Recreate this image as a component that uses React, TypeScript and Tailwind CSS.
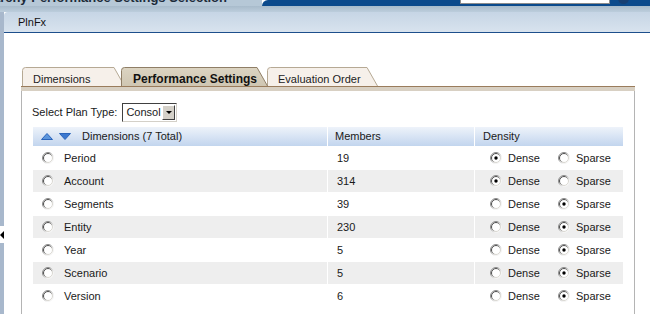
const rows = [
  { name: "Period", members: "19", dense: true },
  { name: "Account", members: "314", dense: true },
  { name: "Segments", members: "39", dense: false },
  { name: "Entity", members: "230", dense: false },
  { name: "Year", members: "5", dense: false },
  { name: "Scenario", members: "5", dense: false },
  { name: "Version", members: "6", dense: false },
];

function Radio({ checked }: { checked?: boolean }) {
  return (
    <svg width="12" height="12" viewBox="0 0 12 12" className="shrink-0">
      <defs>
        <linearGradient id="radio-outer" x1="0" y1="0" x2="1" y2="1">
          <stop offset="0.3" stopColor="#8a8a8a" />
          <stop offset="0.7" stopColor="#f4f4f4" />
        </linearGradient>
        <linearGradient id="radio-inner" x1="0" y1="0" x2="1" y2="1">
          <stop offset="0.3" stopColor="#4a4a4a" />
          <stop offset="0.7" stopColor="#d8d6d0" />
        </linearGradient>
      </defs>
      <circle cx="6" cy="6" r="5.5" fill="white" stroke="url(#radio-outer)" />
      <circle cx="6" cy="6" r="4.5" fill="white" stroke="url(#radio-inner)" />
      {checked && <circle cx="6" cy="6" r="1.7" fill="#000" />}
    </svg>
  );
}

function Tab({ label, w, active, className }: { label: string; w: number; active?: boolean; className: string }) {
  return (
    <div className={`relative h-[19px] shrink-0 ${className}`}>
      <svg width={w} height="19" viewBox={`0 0 ${w} 19`} className="absolute inset-0">
        <defs>
          <linearGradient id="tab-active" x1="0" y1="0" x2="0" y2="1">
            <stop offset="0" stopColor="#dcd4c2" />
            <stop offset="1" stopColor="#cfc6b2" />
          </linearGradient>
        </defs>
        <path
          d={`M0.5 19 V3.5 Q0.5 0.5 3.5 0.5 H${w - 11} L${w - 0.5} 19`}
          fill={active ? "url(#tab-active)" : "#f6f0ea"}
          stroke={active ? "#8f7e66" : "#b6a994"}
        />
      </svg>
      <span
        className={`relative block pl-[11px] pt-[6px] leading-[13px] ${active ? "pl-[12px] font-bold text-[12px] text-[#111]" : "text-[11px] text-[#222]"}`}
      >
        {label}
      </span>
    </div>
  );
}

export default function App() {
  return (
    <div className="relative flex h-[314px] w-[650px] flex-col overflow-hidden bg-white font-['Liberation_Sans',Arial,sans-serif] text-[11px] text-[#1a1a1a]">
      {/* top banner, mostly cut off */}
      <div className="flex h-[6px] shrink-0">
        <div className="flex w-[262px] justify-end overflow-hidden bg-[#b6c8d7] pr-[35px]">
          <span className="-mt-[9px] whitespace-nowrap text-[13px] font-bold leading-[13px] text-[#1c2b3a]">
            Hierarchy Performance Settings Selection
          </span>
        </div>
        <div className="flex flex-1 rounded-tl-[6px] bg-[#0b4a8c] pl-[198px]">
          <div className="h-[4px] w-[150px] border border-t-0 border-[#8c8c8c] bg-white" />
          <div className="-mt-[7px] ml-[8px] h-[11px] w-[11px] rounded-full bg-[#163f73]" />
        </div>
      </div>
      <div className="h-[6px] shrink-0 bg-gradient-to-b from-[#a8bbcb] to-[#bccddc]" />

      <div className="flex flex-1">
        <div className="w-[4px] shrink-0 bg-[#a8b8cc]" />
        <div className="flex flex-1 flex-col">
          <div className="flex h-[21px] items-center rounded-tl-[4px] border-b border-[#1d4f8c] bg-gradient-to-b from-[#c6d5e5] to-[#d8e3ee] pl-[14px] text-[11px] text-[#111]">
            PlnFx
          </div>

          {/* tabs */}
          <div className="ml-[18px] mt-[34px] flex">
            <Tab label="Dimensions" w={103} className="z-0 w-[103px]" />
            <Tab label="Performance Settings" w={147} active className="z-20 -ml-[4px] w-[147px]" />
            <Tab label="Evaluation Order" w={111} className="z-10 -ml-[1px] w-[111px]" />
          </div>

          {/* panel */}
          <div className="ml-[17px] flex w-[614px] flex-1 flex-col">
            <div className="h-[5px] border-t border-[#9a7c5c] bg-[#d8d0c3]" />
            <div className="flex-1 border-x border-[#b4b4b4] pl-[11px] pt-[12px]">
              <div className="flex h-[19px] items-center">
                <span className="-ml-px">Select Plan Type:</span>
                <div className="ml-[5px] flex h-[19px] w-[55px] border border-t-[#404040] border-l-[#404040] border-r-[#d4d0c8] border-b-[#d4d0c8] bg-white">
                  <span className="flex-1 pl-[3px] leading-[17px]">Consol</span>
                  <div className="m-px flex w-[15px] items-center justify-center border border-t-white border-l-white border-r-[#404040] border-b-[#404040] bg-[#d4d0c8]">
                    <div className="border-x-[3px] border-t-[3px] border-x-transparent border-t-black" />
                  </div>
                </div>
              </div>

              {/* table */}
              <div className="mt-[5px] grid w-[590px] grid-cols-[294px_146px_148px] gap-x-px gap-y-px">
                <div className="flex h-[19px] items-center bg-gradient-to-b from-[#eef3fa] to-[#c2d5ee] pl-[8px]">
                  <svg width="12" height="7" viewBox="0 0 12 7" className="mt-[-1px]">
                    <path d="M6 0.5 L11.5 6.5 H0.5 Z" fill="#5b95dc" stroke="#2a64bb" />
                  </svg>
                  <svg width="12" height="7" viewBox="0 0 12 7" className="ml-[6px] mt-[-1px]">
                    <path d="M0.5 0.5 H11.5 L6 6.5 Z" fill="#3b78cf" stroke="#2a64bb" />
                  </svg>
                  <span className="ml-[11px]">Dimensions (7 Total)</span>
                </div>
                <div className="flex h-[19px] items-center bg-gradient-to-b from-[#eef3fa] to-[#c2d5ee] pl-[7px]">
                  Members
                </div>
                <div className="flex h-[19px] items-center bg-gradient-to-b from-[#eef3fa] to-[#c2d5ee] pl-[8px]">
                  Density
                </div>

                {rows.map((r, i) => {
                  const bg = i % 2 === 1 ? "bg-[#eeeeee]" : "bg-white";
                  return (
                    <div key={r.name} className="contents">
                      <div className={`flex h-[22px] items-center pl-[9px] ${bg}`}>
                        <Radio />
                        <span className="ml-[10px]">{r.name}</span>
                      </div>
                      <div className={`flex h-[22px] items-center pl-[9px] ${bg}`}>{r.members}</div>
                      <div className={`flex h-[22px] items-center pl-[15px] ${bg}`}>
                        <div className="flex w-[68px] items-center">
                          <Radio checked={r.dense} />
                          <span className="ml-[6px]">Dense</span>
                        </div>
                        <Radio checked={!r.dense} />
                        <span className="ml-[6px]">Sparse</span>
                      </div>
                    </div>
                  );
                })}
              </div>
            </div>
          </div>
        </div>
      </div>

      {/* collapse handle on the left edge */}
      <div className="absolute left-0 top-[226px] flex h-[17px] w-[5px] items-center bg-white">
        <div className="border-y-[4px] border-r-[4px] border-y-transparent border-r-black" />
      </div>
    </div>
  );
}
